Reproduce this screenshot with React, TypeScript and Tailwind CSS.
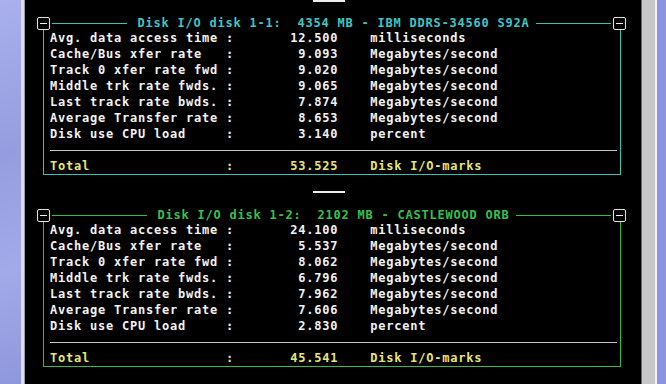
import React from "react";

type Row = [string, string, string];

const box1: Row[] = [
  ["Avg. data access time", "12.500", "milliseconds"],
  ["Cache/Bus xfer rate", "9.093", "Megabytes/second"],
  ["Track 0 xfer rate fwd", "9.020", "Megabytes/second"],
  ["Middle trk rate fwds.", "9.065", "Megabytes/second"],
  ["Last track rate bwds.", "7.874", "Megabytes/second"],
  ["Average Transfer rate", "8.653", "Megabytes/second"],
  ["Disk use CPU load", "3.140", "percent"],
];

const box2: Row[] = [
  ["Avg. data access time", "24.100", "milliseconds"],
  ["Cache/Bus xfer rate", "5.537", "Megabytes/second"],
  ["Track 0 xfer rate fwd", "8.062", "Megabytes/second"],
  ["Middle trk rate fwds.", "6.796", "Megabytes/second"],
  ["Last track rate bwds.", "7.962", "Megabytes/second"],
  ["Average Transfer rate", "7.606", "Megabytes/second"],
  ["Disk use CPU load", "2.830", "percent"],
];

function fmt(label: string, value: string, unit: string) {
  return label.padEnd(22, " ") + ":" + value.padStart(13, " ") + "    " + unit;
}

function Btn() {
  return (
    <div className="w-[13px] h-[13px] shrink-0 border border-[#e4e4e4] rounded-[2px] bg-black flex items-center justify-center">
      <div className="w-[7px] h-[1px] bg-[#f0f0f0]" />
    </div>
  );
}

function Box({
  title,
  rows,
  total,
  lineCls,
  borderCls,
  titleCls,
}: {
  title: string;
  rows: Row[];
  total: string;
  lineCls: string;
  borderCls: string;
  titleCls: string;
}) {
  return (
    <div className="flex flex-col">
      <div className="flex items-center h-[13px]">
        <Btn />
        <div className={`flex-1 h-px ml-[2px] ${lineCls}`} />
        <span className={`pl-[10px] pr-[6px] leading-[13px] whitespace-pre ${titleCls}`}>{title}</span>
        <div className={`flex-1 h-px mr-[2px] ${lineCls}`} />
        <Btn />
      </div>
      <div className={`ml-[6px] mr-[5px] border-l border-r border-b ${borderCls} pl-[6px] pr-[2px]`}>
        {rows.map((r, i) => (
          <div key={i} className="h-[16px] leading-[16px] whitespace-pre text-[#f2f2f2]">
            {fmt(r[0], r[1], r[2])}
          </div>
        ))}
        <div className="h-[16px] flex items-center">
          <div className="h-px flex-1 mr-[1px] bg-[#c4c4c4]" />
        </div>
        <div className="h-[16px] leading-[16px] whitespace-pre text-[#e6e676]">
          {fmt("Total", total, "Disk I/O-marks")}
        </div>
      </div>
    </div>
  );
}

function Dash() {
  return <div className="ml-[288px] w-[32px] h-[2px] bg-[#ececec]" />;
}

export default function App() {
  return (
    <div className="w-[666px] h-[384px] flex overflow-hidden font-['DejaVu_Sans_Mono',monospace] font-bold text-[12px] tracking-[0.78px]">
      <div className="w-[21px] h-full bg-[linear-gradient(160deg,#a9b0ec_0%,#959de0_40%,#a3aaea_70%,#8f97dc_100%)]" />
      <div className="w-[3px] h-full bg-[#dcdde8]" />
      <div className="w-[1px] h-full bg-[#9a9aa6]" />
      <div className="w-[616px] h-full bg-black flex flex-col">
        <Dash />
        <div className="pl-[12px] pr-[15px] mt-[15px]">
          <Box
            title="Disk I/O disk 1-1:  4354 MB - IBM DDRS-34560 S92A"
            rows={box1}
            total="53.525"
            lineCls="bg-[#3cc2b4]"
            borderCls="border-[#3cc2b4]"
            titleCls="text-[#3ec6c4]"
          />
        </div>
        <div className="mt-[16px]">
          <Dash />
        </div>
        <div className="pl-[12px] pr-[15px] mt-[16px]">
          <Box
            title="Disk I/O disk 1-2:  2102 MB - CASTLEWOOD ORB"
            rows={box2}
            total="45.541"
            lineCls="bg-[#34bc44]"
            borderCls="border-[#34bc44]"
            titleCls="text-[#36c246]"
          />
        </div>
      </div>
      <div className="w-[1px] h-full bg-[#6a6a6a]" />
      <div className="w-[13px] h-full bg-[#c6c6c8]" />
      <div className="w-[2px] h-full bg-[#f2f2f4]" />
      <div className="w-[9px] h-full bg-[#8c94e2]" />
    </div>
  );
}
